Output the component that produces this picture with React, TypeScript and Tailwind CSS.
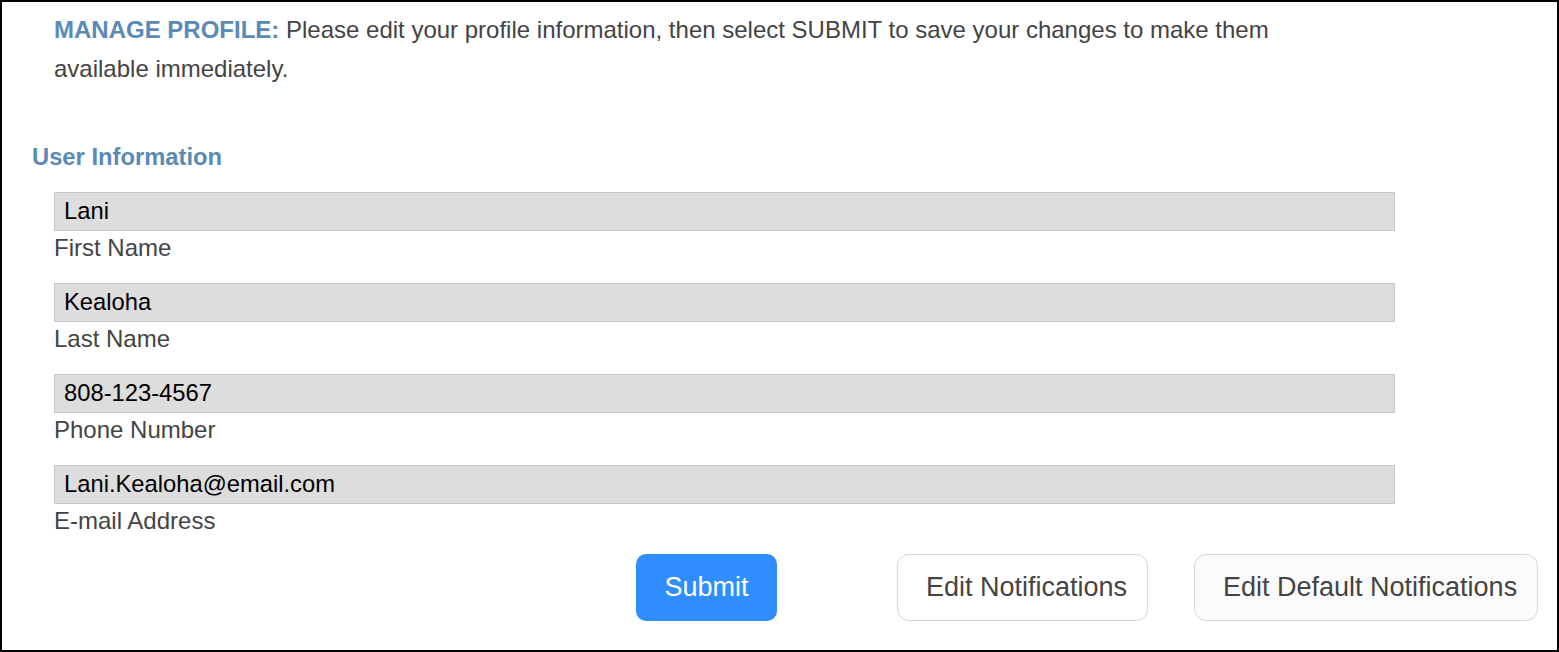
import React from "react";

const fields = [
  { value: "Lani", label: "First Name" },
  { value: "Kealoha", label: "Last Name" },
  { value: "808-123-4567", label: "Phone Number" },
  { value: "Lani.Kealoha@email.com", label: "E-mail Address" },
];

export default function App() {
  return (
    <div
      className="h-[652px] w-[1559px] border-2 border-black bg-white text-[#444444] overflow-hidden"
      style={{ fontFamily: '"Liberation Sans", Arial, sans-serif' }}
    >
      <p className="ml-[52px] mt-[7.5px] w-[1250px] text-[24px] leading-[39px]">
        <span className="font-bold text-[#5b8ab5]">MANAGE PROFILE:</span> Please edit your profile information, then select SUBMIT to save your changes to make them available immediately.
      </p>
      <h2 className="ml-[30px] mt-[55px] text-[23.75px] leading-[28.5px] font-bold text-[#5b8ab5]">
        User Information
      </h2>
      <div className="ml-[52px] mt-[21px] flex flex-col gap-[21px]">
        {fields.map((f) => (
          <div key={f.label} className="flex flex-col">
            <input
              readOnly
              defaultValue={f.value}
              className="h-[39px] w-[1341px] border border-[#c8c8c8] bg-[#dddddd] pl-[9px] pb-[2px] text-[23.75px] text-black outline-none"
              style={{ fontFamily: '"Liberation Sans", Arial, sans-serif' }}
            />
            <label className="mt-[3px] text-[24px] leading-[28px] text-[#444444]">{f.label}</label>
          </div>
        ))}
      </div>
      <div className="mt-[19px] flex items-center">
        <button className="ml-[634px] flex h-[67px] w-[141px] items-center justify-center rounded-[10px] bg-[#2f8dfd] text-[27px] text-white">
          Submit
        </button>
        <button className="ml-[120px] flex h-[67px] w-[251px] items-center rounded-[12px] border border-[#d6d6d6] bg-white pl-[28px] text-[27px] text-[#444444]">
          Edit Notifications
        </button>
        <button className="ml-[46px] flex h-[67px] w-[344px] items-center rounded-[12px] border border-[#d6d6d6] bg-[#fbfbfb] pl-[28px] text-[27px] text-[#444444]">
          Edit Default Notifications
        </button>
      </div>
    </div>
  );
}
